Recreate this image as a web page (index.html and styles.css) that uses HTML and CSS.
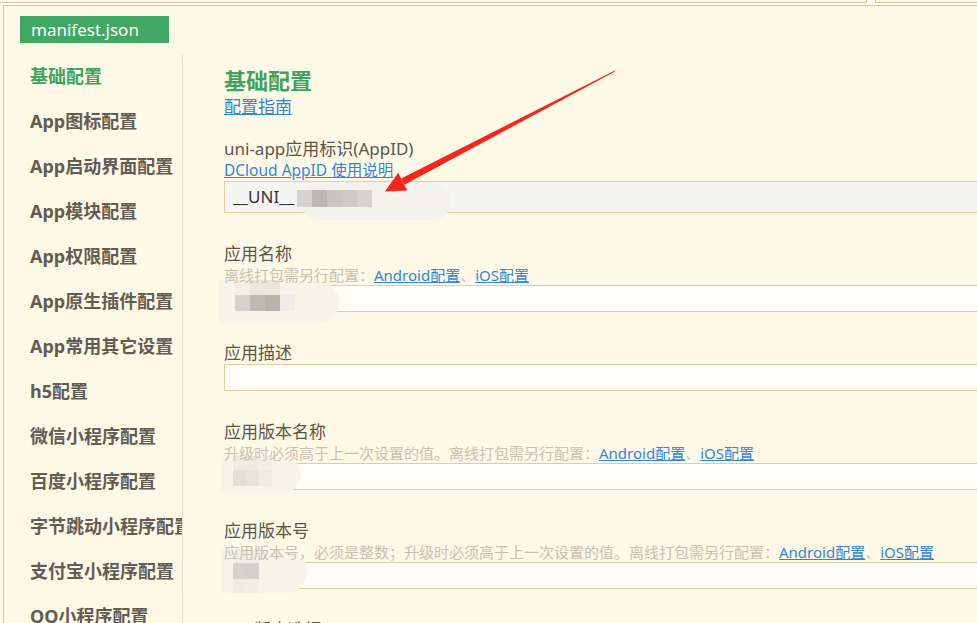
FILE: index.html
```html
<!DOCTYPE html>
<html lang="zh-CN">
<head>
    <meta charset="UTF-8">
    <meta name="viewport" content="width=device-width, initial-scale=1.0">
    <title>manifest.json</title>
    <link rel="stylesheet" href="styles.css">
</head>
<body>

<div class="tab-strip">
    <div class="tab-edge"></div>
    <div class="tab-edge tab-next"></div>
</div>

<div class="frame">
    <div class="file-tab">manifest.json</div>

    <div class="editor">
        <ul class="side-nav">
            <li class="active">基础配置</li>
            <li>App图标配置</li>
            <li>App启动界面配置</li>
            <li>App模块配置</li>
            <li>App权限配置</li>
            <li>App原生插件配置</li>
            <li>App常用其它设置</li>
            <li>h5配置</li>
            <li>微信小程序配置</li>
            <li>百度小程序配置</li>
            <li>字节跳动小程序配置</li>
            <li>支付宝小程序配置</li>
            <li>QQ小程序配置</li>
        </ul>

        <div class="main">
            <h2>基础配置</h2>
            <a class="link guide" href="#">配置指南</a>

            <div class="field first">
                <div class="label">uni-app应用标识(AppID)</div>
                <a class="link hint-link" href="#">DCloud AppID 使用说明</a>
                <div class="input readonly">
                    __UNI__
                    <span class="smear s-appid"></span>
                    <span class="mosaic m-appid">
                        <i style="background:#d3d2cf"></i><i style="background:#b9b8b5"></i><i style="background:#c6c5c2"></i><i style="background:#cbcac7"></i><i style="background:#d4d3d0"></i>
                    </span>
                </div>
            </div>

            <div class="field">
                <div class="label">应用名称</div>
                <div class="hint">离线打包需另行配置：<a class="link" href="#">Android配置</a>、<a class="link" href="#">iOS配置</a></div>
                <div class="input">
                    <span class="smear s-name"></span>
                    <span class="mosaic m-name">
                        <i style="background:#f3efe6"></i><i style="background:#ece8de"></i><i style="background:#ebe7dc"></i><i style="background:#f6f3ec"></i>
                        <i style="background:#d5d2cb"></i><i style="background:#bebab3"></i><i style="background:#b8b3ab"></i><i style="background:#eeede8"></i>
                    </span>
                </div>
            </div>

            <div class="field">
                <div class="label">应用描述</div>
                <div class="input"></div>
            </div>

            <div class="field">
                <div class="label">应用版本名称</div>
                <div class="hint">升级时必须高于上一次设置的值。离线打包需另行配置：<a class="link" href="#">Android配置</a>、<a class="link" href="#">iOS配置</a></div>
                <div class="input">
                    <span class="smear s-ver"></span>
                    <span class="mosaic m-ver">
                        <i style="background:#efece3"></i><i style="background:#eeebe2"></i><i style="background:#f2efe7"></i>
                        <i style="background:#e2dfd7"></i><i style="background:#e6e3db"></i><i style="background:#efece5"></i>
                    </span>
                </div>
            </div>

            <div class="field">
                <div class="label">应用版本号</div>
                <div class="hint">应用版本号，必须是整数；升级时必须高于上一次设置的值。离线打包需另行配置：<a class="link" href="#">Android配置</a>、<a class="link" href="#">iOS配置</a></div>
                <div class="input">
                    <span class="smear s-code"></span>
                    <span class="mosaic m-code">
                        <i style="background:#f1eee5"></i><i style="background:#f0ede4"></i>
                        <i style="background:#d6d2cb"></i><i style="background:#d2d0cd"></i>
                        <i style="background:#efece4"></i><i style="background:#f1eee6"></i>
                    </span>
                </div>
            </div>

            <div class="field">
                <div class="label">Vue版本选择</div>
            </div>
        </div>
    </div>
</div>

<svg class="arrow" width="977" height="623" viewBox="0 0 977 623">
    <polygon fill="#f4261a" points="615.4,70.3 614.6,71.7 404.4,184.8 401.2,178.6"/>
    <polygon fill="#f4261a" points="385,191.5 398.2,172.8 407.4,190.6"/>
</svg>

</body>
</html>
```

FILE: styles.css
```css
body {
    margin: 0;
    height: 623px;
    overflow: hidden;
    background: #fef8e6;
    font-family: "Noto Sans", "Noto Sans CJK SC", sans-serif;
    color: #5a554b;
    position: relative;
}

.tab-strip {
    display: flex;
    height: 3px;
}
.tab-edge {
    width: 866px;
    border-bottom: 1px solid #d6c698;
    border-right: 1px solid #d6c698;
}
.tab-next {
    flex: 1;
    margin-left: 8px;
    border-right: 0;
    border-left: 1px solid #d6c698;
}

.frame {
    margin-top: 2px;
    margin-left: 3px;
    border-top: 1px solid #d6c698;
    border-left: 1px solid #d6c698;
    padding-top: 10px;
}

.file-tab {
    margin-left: 16px;
    width: 149px;
    height: 27px;
    line-height: 27px;
    box-sizing: border-box;
    padding-left: 11px;
    background: #41a863;
    color: #fff;
    font-size: 17px;
}

.editor {
    display: flex;
    margin-top: 11px;
}

.side-nav {
    list-style: none;
    margin: 0;
    padding: 0 0 0 26px;
    width: 179px;
    box-sizing: border-box;
    flex-shrink: 0;
    border-right: 1px solid #ebe2c5;
    overflow: hidden;
    white-space: nowrap;
}
.side-nav li {
    height: 45px;
    line-height: 45px;
    font-size: 18px;
    font-weight: bold;
    color: #625d53;
}
.side-nav li.active {
    color: #3ea35d;
}

.main {
    padding: 12px 0 0 41px;
    width: 900px;
    flex-shrink: 0;
}
.main h2 {
    margin: 0;
    font-size: 22px;
    line-height: 28px;
    color: #3ea35d;
}

.link {
    color: #2f87dc;
    text-decoration: underline;
}
.guide {
    display: block;
    margin-top: 3px;
    font-size: 17px;
    line-height: 20px;
}

.field {
    margin-top: 30px;
}
.field.first {
    margin-top: 21px;
}
.label {
    font-size: 17px;
    line-height: 22px;
    color: #5a554b;
}
.hint-link {
    display: block;
    font-size: 15.5px;
    line-height: 21px;
}
.hint {
    position: relative;
    z-index: 1;
    font-size: 15px;
    line-height: 20px;
    color: #c9c1b2;
    white-space: nowrap;
}

.input {
    position: relative;
    height: 27px;
    border: 1px solid #dccfa6;
    border-right: 0;
    background: #fffdf6;
    font-size: 17px;
    line-height: 27px;
    color: #333;
    padding-left: 8px;
    box-sizing: border-box;
}
.input.readonly {
    height: 32px;
    line-height: 30px;
    background: #f5f5f4;
}

.mosaic {
    position: absolute;
    display: grid;
}
.mosaic i {
    display: block;
}
.m-appid {
    left: 72px;
    top: 8px;
    grid-template-columns: repeat(5, 15px);
    grid-auto-rows: 17px;
}
.m-name {
    left: 10px;
    top: -6px;
    grid-template-columns: repeat(4, 15px);
    grid-auto-rows: 15px 16px;
}
.m-ver {
    left: 8px;
    top: -8px;
    grid-template-columns: repeat(3, 13px);
    grid-auto-rows: 14px 16px;
}
.m-code {
    left: 8px;
    top: -14px;
    grid-template-columns: repeat(2, 13px);
    grid-auto-rows: 14px 16px 14px;
}

.smear {
    position: absolute;
    background: #f8f4ea;
    border-radius: 0 30px 30px 0;
}
.s-appid {
    left: 76px;
    top: 0;
    width: 150px;
    height: 38px;
    background: #f3f2ec;
    border-radius: 20px;
}
.s-name {
    left: -6px;
    top: -5px;
    width: 120px;
    height: 42px;
}
.s-ver {
    left: -4px;
    top: -7px;
    width: 80px;
    height: 36px;
}
.s-code {
    left: -4px;
    top: -14px;
    width: 86px;
    height: 44px;
}

.arrow {
    position: absolute;
    left: 0;
    top: 0;
    pointer-events: none;
}
```
